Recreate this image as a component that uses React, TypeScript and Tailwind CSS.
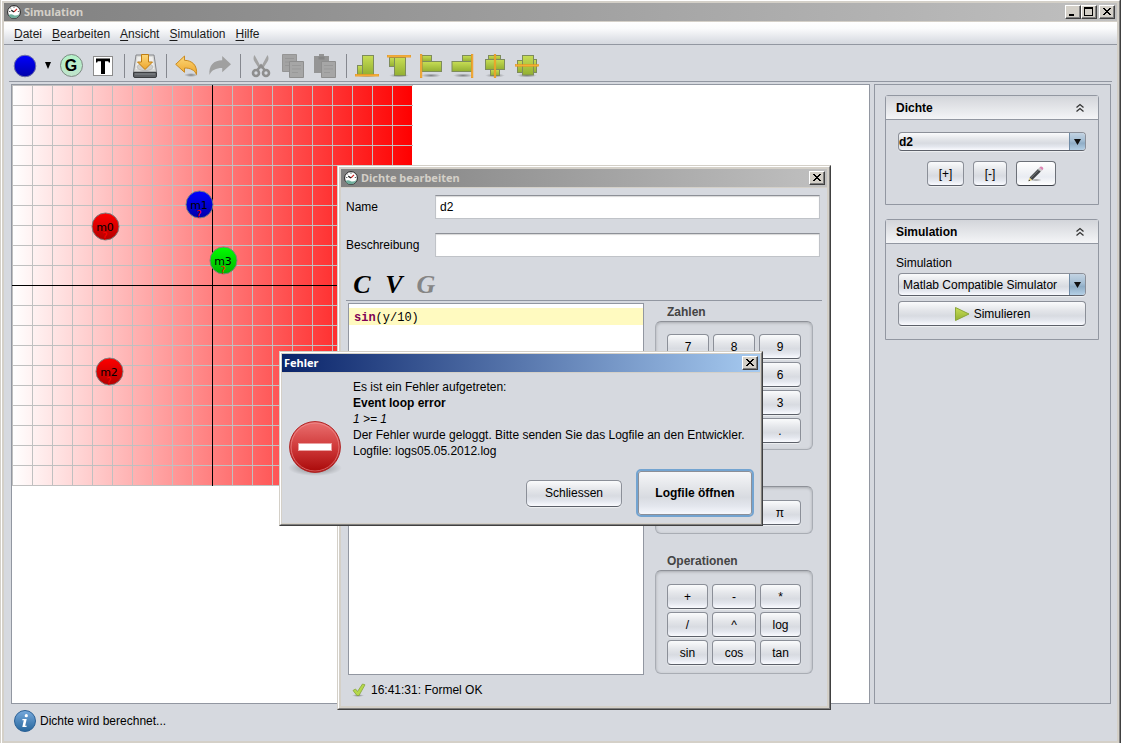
import React from "react";
import type { ReactNode } from "react";

const buttonFace =
  "border border-[#8b8f98] border-b-[#5c6069] bg-[linear-gradient(180deg,#fafbfc_0%,#e4e6ea_35%,#d8dbe1_60%,#e4e7ee_80%,#fafbff_100%)] shadow-[0_1px_1px_rgba(255,255,255,0.6)]";

function Frame({ children, inset, className }: { children: ReactNode; inset: string; className: string }) {
  return (
    <div className={`flex flex-col border border-t-[#d4d0c8] border-l-[#d4d0c8] border-r-[#404040] border-b-[#404040] ${className}`}>
      <div className={`flex grow flex-col border border-t-white border-l-white border-r-[#808080] border-b-[#808080] bg-[#d4d0c8] ${inset}`}>
        {children}
      </div>
    </div>
  );
}

function CaptionButton({ label, children }: { label: string; children: ReactNode }) {
  return (
    <button
      aria-label={label}
      className="flex h-[14px] w-4 items-center justify-center border border-t-white border-l-white border-r-[#404040] border-b-[#404040] bg-[#d4d0c8] shadow-[inset_-1px_-1px_0_#808080]"
    >
      <svg width="10" height="10" viewBox="0 0 10 10" shapeRendering="crispEdges">
        {children}
      </svg>
    </button>
  );
}

const closeGlyph = <path d="M1 1h2v1h1v1h2v-1h1v-1h2v1h-1v1h-1v1h-1v1h1v1h1v1h1v1h-2v-1h-1v-1h-2v1h-1v1h-2v-1h1v-1h1v-1h1v-1h-1v-1h-1v-1h-1z" fill="#000" />;

function AppIcon() {
  return (
    <svg width="14" height="14" viewBox="0 0 14 14" aria-hidden="true">
      <circle cx="7" cy="7" r="6.4" fill="#fff" stroke="#222" strokeWidth="1" />
      <path d="M1.500 10q2.500-1.500 5 0t6-1a6 6 0 0 1-11 1z" fill="#6fae9c" />
      <path d="M7 6.800 10 3.800" stroke="#c22" strokeWidth="1.2" />
      <path d="M7 7 4.300 5.200" stroke="#111" strokeWidth="1.3" />
      <path d="M7 1.500v1.400M2 6.500h1.400M10.800 6.500h1.400M3.400 3l.9.9" stroke="#555" strokeWidth=".9" />
    </svg>
  );
}

function ToolButton({ label, children, disabled }: { label: string; children: ReactNode; disabled?: boolean }) {
  return (
    <button aria-label={label} disabled={disabled} className="flex h-6 w-8 items-center justify-center">
      <svg width="24" height="24" viewBox="0 0 24 24">
        {children}
      </svg>
    </button>
  );
}

function Separator() {
  return (
    <div className="flex h-6 w-[10px] justify-center">
      <div className="w-px bg-[#85888f]" />
    </div>
  );
}

function Green({ x, y, w, h }: { x: number; y: number; w: number; h: number }) {
  return <rect x={x} y={y} width={w} height={h} fill="url(#green)" stroke="#7e8c5c" strokeWidth="1" />;
}

function Orange({ x, y, w, h }: { x: number; y: number; w: number; h: number }) {
  return <rect x={x} y={y} width={w} height={h} fill="#f7b13c" stroke="#e8961a" strokeWidth=".6" />;
}

const shadow = <ellipse cx="12" cy="21.5" rx="10" ry="2" fill="url(#shade)" />;

function Defs() {
  return (
    <svg width="0" height="0" className="absolute" aria-hidden="true">
      <defs>
        <linearGradient id="green" x1="0" y1="0" x2="0" y2="1">
          <stop offset="0" stopColor="#c8de55" />
          <stop offset="1" stopColor="#93b032" />
        </linearGradient>
        <radialGradient id="shade">
          <stop offset="0" stopColor="#000" stopOpacity=".4" />
          <stop offset="1" stopColor="#000" stopOpacity="0" />
        </radialGradient>
        <linearGradient id="gold" x1="0" y1="0" x2="0" y2="1">
          <stop offset="0" stopColor="#fcd778" />
          <stop offset="1" stopColor="#eda52c" />
        </linearGradient>
        <linearGradient id="blue" x1="0" y1="0" x2="0" y2="1">
          <stop offset="0" stopColor="#0000ff" />
          <stop offset="1" stopColor="#0000aa" />
        </linearGradient>
        <linearGradient id="red" x1="0" y1="0" x2="0" y2="1">
          <stop offset="0" stopColor="#ff0000" />
          <stop offset="1" stopColor="#b40000" />
        </linearGradient>
        <linearGradient id="lime" x1="0" y1="0" x2="0" y2="1">
          <stop offset="0" stopColor="#00ff00" />
          <stop offset="1" stopColor="#00b400" />
        </linearGradient>
        <linearGradient id="density" x1="0" y1="0" x2="1" y2="0">
          <stop offset="0" stopColor="#fff" />
          <stop offset="1" stopColor="#f00" />
        </linearGradient>
      </defs>
    </svg>
  );
}

function Toolbar() {
  return (
    <div className="mx-[5px] flex h-[37px] items-center border-b border-[#9297a1] pt-[5px]">
      <ToolButton label="Masse">
        <circle cx="12" cy="12" r="10.8" fill="url(#blue)" stroke="#6f72a8" strokeWidth="1" />
      </ToolButton>
      <button aria-label="Auswahl" className="flex h-6 w-[14px] items-center justify-center">
        <svg width="6" height="7" viewBox="0 0 6 7">
          <path d="M0 0h6L3 7z" fill="#000" />
        </svg>
      </button>
      <button aria-label="G" className="flex h-6 w-8 items-center justify-center">
        <span className="flex size-[23px] items-center justify-center rounded-full border border-[#7d8a83] bg-[linear-gradient(180deg,#b4f3c9,#bfe3cb)] text-base/5 font-bold text-black">
          G
        </span>
      </button>
      <button aria-label="T" className="flex h-6 w-8 items-center justify-center">
        <svg width="20" height="20" viewBox="0 0 20 20">
          <rect x=".5" y=".5" width="19" height="19" fill="#fff" stroke="#8c8c8c" />
          <path d="M3 2.500h14v4h-1.200l-.5-1.200H12V18H8V5.300H4.700l-.5 1.200H3z" fill="#000" />
        </svg>
      </button>
      <Separator />
      <ToolButton label="Speichern">
        <path d="M3 1h18l2.500 17H.5z" fill="#d9dad8" stroke="#85868a" />
        <path d="M4.500 3h15l1.800 12H2.700z" fill="#efefee" />
        <ellipse cx="12" cy="13" rx="8" ry="3.600" fill="#cfd0ce" stroke="#aaa" strokeWidth=".6" />
        <path d="M.5 18.500h23V22q0 1.500-1.500 1.500H2Q.5 23.500.5 22z" fill="#5f6266" stroke="#3b3d40" />
        <path d="M2 20h20" stroke="#85898d" />
        <path d="M8.500.5h7v7.500h4L12 15.500 4.500 8h4z" fill="url(#gold)" stroke="#c07d12" />
      </ToolButton>
      <Separator />
      <ToolButton label="Rückgängig">
        <ellipse cx="16" cy="21" rx="7" ry="2" fill="url(#shade)" />
        <path d="M.7 10.300 9.500 2v4.300C17 6.500 22.500 11 21.500 20.500c-2-4.500-6-6.500-12-6.500v4.300z" fill="url(#gold)" stroke="#c98a22" strokeLinejoin="round" />
      </ToolButton>
      <ToolButton label="Wiederholen" disabled>
        <path d="M24 10.300 15.200 2v4.300C7 6.500 1.500 11 2.500 21c2-5 6.500-7 12.700-7v4.300z" fill="#a0a0a0" />
      </ToolButton>
      <Separator />
      <ToolButton label="Ausschneiden" disabled>
        <path d="M5.500 1 12 13 18.500 1q2 3 0 6.500L14 14.500h-4L5.500 7.500Q3.500 4 5.500 1z" fill="#a3a3a3" />
        <circle cx="7" cy="19" r="3" fill="none" stroke="#8e8e8e" strokeWidth="2.600" />
        <circle cx="17" cy="19" r="3" fill="none" stroke="#8e8e8e" strokeWidth="2.600" />
        <path d="M8 16.500 12 11.500l4 5" stroke="#8e8e8e" strokeWidth="2.400" fill="none" />
      </ToolButton>
      <ToolButton label="Kopieren" disabled>
        <path d="M1.500.5h14v17h-14z" fill="#a3a3a3" stroke="#959595" />
        <path d="M4 4.500h9M4 8h9M4 11.500h4" stroke="#979797" />
        <path d="M8.500 7.500h14v16h-14z" fill="#a6a6a6" stroke="#8e8e8e" />
        <path d="M11 11.500h9M11 15h9M11 18.500h6" stroke="#999" />
      </ToolButton>
      <ToolButton label="Einfügen" disabled>
        <path d="M1 2h5V0h5v2h5v17H1z" fill="#959595" />
        <path d="M5.500 2.500h6v3h-6z" fill="#858585" />
        <path d="M8.500 7.500h14v16h-14z" fill="#a6a6a6" stroke="#8e8e8e" />
        <path d="M11 11.500h9M11 15h9M11 18.500h6" stroke="#999" />
      </ToolButton>
      <Separator />
      <ToolButton label="Unten ausrichten">
        {shadow}
        <Green x={2.5} y={11.5} w={5} h={9} />
        <Green x={7.5} y={1.5} w={11} h={19} />
        <Orange x={0.3} y={20.3} w={23.4} h={1.8} />
      </ToolButton>
      <ToolButton label="Oben ausrichten">
        {shadow}
        <Green x={2.5} y={3.5} w={5} h={9} />
        <Green x={7.5} y={3.5} w={11} h={18} />
        <Orange x={0.3} y={1.3} w={23.4} h={1.8} />
      </ToolButton>
      <ToolButton label="Links ausrichten">
        {shadow}
        <Green x={3} y={1.5} w={9.5} h={6} />
        <Green x={3} y={7.5} w={19.5} h={10} />
        <Orange x={1.3} y={0.3} w={1.6} h={23.4} />
      </ToolButton>
      <ToolButton label="Rechts ausrichten">
        {shadow}
        <Green x={11.5} y={1.5} w={9} h={6} />
        <Green x={1} y={7.5} w={19.5} h={10} />
        <Orange x={20.3} y={0.3} w={1.6} h={23.4} />
      </ToolButton>
      <ToolButton label="Horizontal zentrieren">
        {shadow}
        <Green x={5.5} y={1.5} w={12} h={5} />
        <Green x={7.5} y={15.5} w={9} h={6} />
        <Green x={2.5} y={5.5} w={19} h={10} />
        <Orange x={11.2} y={0.3} w={1.6} h={23.4} />
      </ToolButton>
      <ToolButton label="Vertikal zentrieren">
        {shadow}
        <Green x={2.5} y={6.5} w={6} h={12} />
        <Green x={17.5} y={5.5} w={4} h={13} />
        <Green x={7.5} y={1.5} w={11} h={19.5} />
        <Orange x={0.3} y={10.6} w={23.4} h={1.6} />
      </ToolButton>
    </div>
  );
}

const masses = [
  { name: "m0", x: 93, y: 141, fill: "url(#red)" },
  { name: "m1", x: 187, y: 119, fill: "url(#blue)" },
  { name: "m3", x: 211, y: 175, fill: "url(#lime)" },
  { name: "m2", x: 97, y: 286, fill: "url(#red)" },
];

const gridSteps = Array.from({ length: 21 }, (_, i) => i * 20);

function Plot() {
  return (
    <svg width="401" height="401" viewBox="0 0 401 401" className="block">
      <rect width="400" height="401" fill="url(#density)" />
      <g fill="#c0c0c0" shapeRendering="crispEdges">
        {gridSteps.map((p) => (
          <rect key={`h${p}`} x="0" y={p} width="401" height="1" />
        ))}
        {gridSteps.slice(0, 20).map((p) => (
          <rect key={`v${p}`} x={p} y="0" width="1" height="401" />
        ))}
        <rect x="200" y="0" width="1" height="401" fill="#000" />
        <rect x="0" y="200" width="401" height="1" fill="#000" />
      </g>
      {masses.map((m) => (
        <g key={m.name} textAnchor="middle" fontFamily="'DejaVu Sans', sans-serif">
          <circle cx={m.x + 0.5} cy={m.y + 0.5} r="13.5" fill={m.fill} stroke="#808080" />
          <text x={m.x} y={m.y + 5} fontSize="11" fill="#000">
            {m.name}
          </text>
          <text x={m.x} y={m.y + 14} fontSize="10" fill="#ff0000">
            ?
          </text>
        </g>
      ))}
    </svg>
  );
}

function Combo({ id, label, value, className, height }: { id: string; label?: string; value: string; className: string; height: string }) {
  return (
    <div className={`relative flex w-full overflow-hidden rounded-[4px] ${buttonFace} ${height}`}>
      <select id={id} aria-label={label} className={`w-full appearance-none bg-transparent pr-5 text-black outline-none ${className}`}>
        <option>{value}</option>
      </select>
      <span className="pointer-events-none absolute inset-y-0 right-0 flex w-4 items-center justify-center border-l border-[#6f8ba6] bg-[linear-gradient(180deg,#c3d3e2_0%,#a3bdd3_45%,#8fadc6_60%,#b5d0e6_100%)]">
        <svg width="7" height="6" viewBox="0 0 7 6">
          <path d="M0 0h7L3.500 6z" fill="#111" />
        </svg>
      </span>
    </div>
  );
}

function TaskPane({ title, children }: { title: string; children: ReactNode }) {
  return (
    <section className="rounded-t-[3px] border border-[#9297a1]">
      <header className="flex h-6 items-center justify-between border-b border-[#9297a1] bg-[linear-gradient(180deg,#d3d5da,#f4f5f7)] pr-3 pl-[10px]">
        <h2 className="font-bold">{title}</h2>
        <button aria-label={`${title} einklappen`}>
          <svg width="12" height="12" viewBox="0 0 12 12" fill="none" stroke="#333" strokeWidth="1.300">
            <path d="M2.500 5.500 6 2.500 9.500 5.500M2.500 9.500 6 6.500 9.500 9.500" />
          </svg>
        </button>
      </header>
      {children}
    </section>
  );
}

function Sidebar() {
  return (
    <aside className="flex w-[237px] shrink-0 flex-col gap-[14px] border border-[#9297a1] py-[10px] pr-[11px] pl-[10px]">
      <TaskPane title="Dichte">
        <div className="flex flex-col gap-[10px] px-3 pt-3 pb-[18px]">
          <Combo id="dichte" label="Dichte" value="d2" className="font-bold" height="h-[19px]" />
          <div className="flex justify-center gap-[9px] pr-px">
            <button className={`h-[25px] w-[37px] rounded-[4px] ${buttonFace}`}>[+]</button>
            <button className={`h-[25px] w-[34px] rounded-[4px] ${buttonFace}`}>[-]</button>
            <button
              aria-label="Bearbeiten"
              className="flex h-[25px] w-10 items-center justify-center rounded-[4px] border border-[#6c7078] border-b-[#3c4048] bg-[linear-gradient(180deg,#fff_0%,#eef0f4_50%,#e9ecf2_65%,#fff_100%)]"
            >
              <svg width="16" height="16" viewBox="0 0 16 16">
                <ellipse cx="8" cy="14" rx="6" ry="1.500" fill="url(#shade)" />
                <path d="M.5 15.300 1.600 11.500 4.300 14z" fill="#e8d37c" />
                <path d="m.5 15.300.4-1.700 1.400 1.200z" fill="#333" />
                <path d="M1.600 11.500 10 3l2.800 2.600L4.300 14z" fill="#3f4245" />
                <path d="m2.700 12 8.300-8.200" stroke="#84898c" strokeWidth=".8" />
                <path d="m10 3 1.400-1.400L14.200 4.200 12.800 5.600z" fill="#c9c9c9" />
                <path d="M11.400 1.600Q13-.2 14.700 1.300q1.500 1.500-.5 2.900z" fill="#dd86b4" />
              </svg>
            </button>
          </div>
        </div>
      </TaskPane>
      <TaskPane title="Simulation">
        <div className="flex flex-col px-3 pt-[9px] pb-[13px]">
          <label htmlFor="simulator" className="-ml-0.5 leading-5">
            Simulation
          </label>
          <Combo id="simulator" value="Matlab Compatible Simulator" className="pl-1" height="h-[23px]" />
          <button className={`mt-[5px] flex h-[25px] items-center justify-center gap-1 rounded-[4px] ${buttonFace}`}>
            <svg width="16" height="16" viewBox="0 0 16 16">
              <path d="M1.500 1.500v13L15 8z" fill="url(#green)" stroke="#8aa63a" />
            </svg>
            Simulieren
          </button>
        </div>
      </TaskPane>
    </aside>
  );
}

const groupBox = "rounded-[6px] border border-[#a9adb4] border-t-[#8e9198] px-[11px] shadow-[inset_0_1px_3px_rgba(0,0,0,0.22)]";

function Key({ children, className }: { children: ReactNode; className?: string }) {
  return <button className={`h-[25px] rounded-[4px] ${buttonFace} ${className ?? ""}`}>{children}</button>;
}

function Keypad() {
  return (
    <div className="flex w-[158px] flex-col">
      <h3 className="mt-[3px] pl-3 leading-[17px] font-bold text-[#444]">Zahlen</h3>
      <div className={`grid grid-cols-3 gap-x-1 gap-y-[3px] pt-3 pb-[6px] ${groupBox}`}>
        {["7", "8", "9", "4", "5", "6", "1", "2", "3"].map((k) => (
          <Key key={k}>{k}</Key>
        ))}
        <Key className="col-start-3">.</Key>
      </div>
      <div className={`mt-9 grid grid-cols-3 gap-x-1 pt-[13px] pb-[8px] ${groupBox}`}>
        <Key className="col-start-3">π</Key>
      </div>
      <h3 className="mt-[18px] pl-3 leading-[18px] font-bold text-[#444]">Operationen</h3>
      <div className={`grid grid-cols-[41fr_44fr_41fr] gap-x-1 gap-y-[3px] pt-[13px] pb-[8px] ${groupBox}`}>
        {["+", "-", "*", "/", "^", "log", "sin", "cos", "tan"].map((k) => (
          <Key key={k}>{k}</Key>
        ))}
      </div>
    </div>
  );
}

const field =
  "h-6 w-full border border-[#c0c3c8] border-t-[#8d9097] bg-white px-1 text-black shadow-[inset_0_1px_1px_#d8d8d8] outline-none";

function EditDialog() {
  return (
    <Frame inset="p-[2px]" className="absolute top-[165px] left-[336px] h-[545px] w-[494px]">
      <header className="flex h-[18px] items-center gap-[3px] bg-[linear-gradient(90deg,#808080,#c0c0c0)] pr-[2px] pl-[3px]">
        <AppIcon />
        <h2 className="grow font-['Noto_Sans',sans-serif] text-[11px] leading-[18px] font-bold text-[#d4d0c8]">Dichte bearbeiten</h2>
        <CaptionButton label="Schliessen">{closeGlyph}</CaptionButton>
      </header>
      <div className="mt-px flex grow flex-col bg-[#d6d9df] pt-[7px] pr-[5px] pl-[5px]">
        <div className="grid grid-cols-[89px_1fr] items-center gap-y-[14px] pr-[2px]">
          <label htmlFor="name">Name</label>
          <input id="name" defaultValue="d2" className={field} />
          <label htmlFor="beschreibung">Beschreibung</label>
          <input id="beschreibung" className={field} />
        </div>
        <div className="mt-3 flex h-8 items-center border-b border-[#9297a1] font-['Liberation_Serif',serif] text-[26px] leading-8 font-bold text-black italic">
          <button className="w-8">C</button>
          <button className="w-8">V</button>
          <button disabled className="w-8 text-[#858585]">
            G
          </button>
        </div>
        <div className="flex grow gap-[11px] pl-[2px]">
          <div
            role="textbox"
            aria-label="Formel"
            aria-multiline="true"
            contentEditable
            suppressContentEditableWarning
            className="mt-[2px] grow border border-[#9297a1] bg-white pt-1 font-['Liberation_Mono',monospace] outline-none"
          >
            <div className="h-[17px] bg-[#fffac0] pl-[5px] leading-5">
              <b className="text-[#7f0055]">sin</b>(y/10)
            </div>
          </div>
          <div className="pr-[9px]">
            <Keypad />
          </div>
        </div>
        <p role="status" className="flex h-[31px] items-center gap-[5px] pb-[2px] pl-[6px]">
          <svg width="14" height="14" viewBox="0 0 14 14" aria-hidden="true">
            <ellipse cx="6" cy="12.500" rx="6" ry="1.500" fill="url(#shade)" />
            <path d="M1 7.500 3.500 6l2 2.500L10.500 1l2.500.8L7 12.500H5z" fill="#b5d84a" stroke="#86a63a" strokeWidth=".8" strokeLinejoin="round" />
          </svg>
          16:41:31: Formel OK
        </p>
      </div>
    </Frame>
  );
}

function ErrorDialog() {
  return (
    <Frame inset="p-px" className="absolute top-[351px] left-[278px] w-[484px]">
      <header className="flex h-[18px] items-center bg-[linear-gradient(90deg,#0a246a,#a6caf0)] px-[2px]">
        <h2 className="grow font-['Noto_Sans',sans-serif] text-[11px] leading-[18px] font-bold text-white">Fehler</h2>
        <CaptionButton label="Schliessen">{closeGlyph}</CaptionButton>
      </header>
      <div role="alertdialog" aria-label="Fehler" className="mt-px flex bg-[#d6d9df] py-[6px] pr-[6px] pl-[5px]">
        <div className="flex w-[66px] shrink-0 items-center">
          <svg width="56" height="58" viewBox="0 0 56 58" aria-hidden="true">
            <defs>
              <linearGradient id="stop" x1="0" y1="0" x2="0" y2="1">
                <stop offset="0" stopColor="#ea7070" />
                <stop offset=".5" stopColor="#d03a3a" />
                <stop offset="1" stopColor="#a80808" />
              </linearGradient>
            </defs>
            <ellipse cx="28" cy="49" rx="27" ry="8" fill="url(#shade)" />
            <circle cx="28" cy="28" r="25.400" fill="url(#stop)" stroke="#b02424" />
            <circle cx="28" cy="28" r="24" fill="none" stroke="#f09a9a" strokeOpacity=".6" />
            <rect x="11.500" y="24.500" width="33" height="7" fill="#fff" stroke="#e9a0a0" />
          </svg>
        </div>
        <div className="flex grow flex-col gap-[10px]">
          <div className="leading-4 whitespace-nowrap">
            <p>Es ist ein Fehler aufgetreten:</p>
            <p className="font-bold">Event loop error</p>
            <p className="italic">1 &gt;= 1</p>
            <p>Der Fehler wurde geloggt. Bitte senden Sie das Logfile an den Entwickler.</p>
            <p>Logfile: logs05.05.2012.log</p>
          </div>
          <div className="flex h-12 items-center justify-end gap-[14px]">
            <button className={`h-[27px] w-24 rounded-[5px] ${buttonFace}`}>Schliessen</button>
            <button className="h-12 w-[118px] rounded-[5px] border-2 border-[#73a4d1] bg-[linear-gradient(180deg,#f6f7f9_0%,#e2e4e8_40%,#d8dbe1_60%,#e4e7ee_80%,#f8faff_100%)] font-bold shadow-[inset_0_0_0_1px_#8b8f98]">
              Logfile öffnen
            </button>
          </div>
        </div>
      </div>
    </Frame>
  );
}

const menus = ["Datei", "Bearbeiten", "Ansicht", "Simulation", "Hilfe"];

export default function App() {
  return (
    <div className="relative flex min-h-screen flex-col border-r border-l border-r-[#404040] border-l-[#d4d0c8] bg-[#d4d0c8] font-['Liberation_Sans',Arial,sans-serif] text-[12px] leading-4 text-black">
      <Defs />
      <div className="flex grow flex-col border-t border-r border-l border-t-white border-r-[#808080] border-l-white p-[2px]">
        <header className="flex h-[18px] items-center gap-[3px] bg-[linear-gradient(90deg,#808080,#c0c0c0)] pr-[2px] pl-[3px]">
          <AppIcon />
          <h1 className="grow font-['Noto_Sans',sans-serif] text-[11px] leading-[18px] font-bold text-[#d4d0c8]">Simulation</h1>
          <div className="flex">
            <CaptionButton label="Minimieren">
              <path d="M1 7h5v2H1z" />
            </CaptionButton>
            <CaptionButton label="Maximieren">
              <path d="M0 0h9v9H0zM1 2v6h7V2z" fillRule="evenodd" />
            </CaptionButton>
            <span className="w-[2px]" />
            <CaptionButton label="Beenden">{closeGlyph}</CaptionButton>
          </div>
        </header>
        <div className="mt-px flex grow flex-col bg-[#d6d9df]">
          <nav className="flex h-[23px] items-center gap-[10px] border-b border-[#9297a1] bg-[linear-gradient(180deg,#fff_0%,#fafbfc_30%,#dcdfe5_85%,#d6d9df_100%)] pt-px pl-[10px]">
            {menus.map((m) => (
              <button key={m} className="text-[#1a1a1a]">
                <span className="underline underline-offset-2">{m[0]}</span>
                {m.slice(1)}
              </button>
            ))}
          </nav>
          <Toolbar />
          <main className="mt-[2px] flex grow gap-1 pr-[6px] pl-[7px]">
            <div className="grow border border-[#9297a1] bg-white">
              <Plot />
            </div>
            <Sidebar />
          </main>
          <footer className="flex h-[37px] items-center gap-1 pb-[3px] pl-[10px]">
            <svg width="22" height="22" viewBox="0 0 22 22" aria-hidden="true">
              <defs>
                <linearGradient id="info" x1="0" y1="0" x2="0" y2="1">
                  <stop offset="0" stopColor="#77a9dc" />
                  <stop offset="1" stopColor="#26669c" />
                </linearGradient>
              </defs>
              <circle cx="11" cy="11" r="10.500" fill="url(#info)" stroke="#2c6196" />
              <circle cx="12.300" cy="5.700" r="1.600" fill="#fff" />
              <path d="M8.500 9h4.200l-1.500 6.700h1.600l-.4 1.300H8.300l1.500-6.700H8.200z" fill="#fff" />
            </svg>
            <span role="status">Dichte wird berechnet...</span>
          </footer>
        </div>
      </div>
      <EditDialog />
      <ErrorDialog />
    </div>
  );
}
